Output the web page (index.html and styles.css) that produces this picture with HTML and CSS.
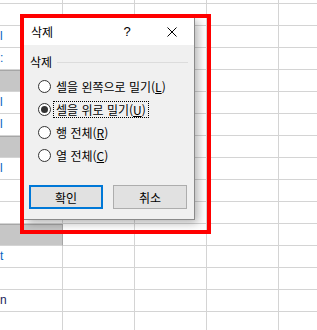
FILE: index.html
```html
<!DOCTYPE html>
<html lang="ko">
<head>
  <meta charset="UTF-8" />
  <title>삭제</title>
  <link rel="stylesheet" href="styles.css">
</head>
<body>
<div class="sheet">
  <div class="grid">
    <div class="cell"></div><div class="cell"></div><div class="cell"></div><div class="cell"></div><div class="cell"></div>
    <div class="cell"></div><div class="cell"></div><div class="cell"></div><div class="cell"></div><div class="cell"></div>
    <div class="cell"><span class="frag">l</span></div><div class="cell"></div><div class="cell"></div><div class="cell"></div><div class="cell"></div>
    <div class="cell"><span class="frag">:</span></div><div class="cell"></div><div class="cell"></div><div class="cell"></div><div class="cell"></div>
    <div class="cell sel"></div><div class="cell"></div><div class="cell"></div><div class="cell"></div><div class="cell"></div>
    <div class="cell"><span class="frag">l</span></div><div class="cell"></div><div class="cell"></div><div class="cell"></div><div class="cell"></div>
    <div class="cell"><span class="frag">l</span></div><div class="cell"></div><div class="cell"></div><div class="cell"></div><div class="cell"></div>
    <div class="cell sel"></div><div class="cell"></div><div class="cell"></div><div class="cell"></div><div class="cell"></div>
    <div class="cell"><span class="frag">l</span></div><div class="cell"></div><div class="cell"></div><div class="cell"></div><div class="cell"></div>
    <div class="cell"></div><div class="cell"></div><div class="cell"></div><div class="cell"></div><div class="cell"></div>
    <div class="cell"></div><div class="cell"></div><div class="cell"></div><div class="cell"></div><div class="cell"></div>
    <div class="cell sel"></div><div class="cell"></div><div class="cell"></div><div class="cell"></div><div class="cell"></div>
    <div class="cell"><span class="frag">t</span></div><div class="cell"></div><div class="cell"></div><div class="cell"></div><div class="cell"></div>
    <div class="cell"></div><div class="cell"></div><div class="cell"></div><div class="cell"></div><div class="cell"></div>
    <div class="cell"><span class="frag dark">n</span></div><div class="cell"></div><div class="cell"></div><div class="cell"></div><div class="cell"></div>
    <div class="cell"></div><div class="cell"></div><div class="cell"></div><div class="cell"></div><div class="cell"></div>
  </div>

  <div class="callout">
    <div class="dialog" role="dialog" aria-label="삭제">
      <div class="titlebar">
        <span class="title">삭제</span>
        <span class="help">?</span>
        <span class="close">
          <svg width="10" height="10" viewBox="0 0 10 10" aria-hidden="true">
            <path d="M0.5 0.5 L9.5 9.5 M9.5 0.5 L0.5 9.5" stroke="#000" stroke-width="1" fill="none" />
          </svg>
        </span>
      </div>
      <div class="body">
        <div class="group-head"><span>삭제</span><span class="rule"></span></div>
        <div class="option"><span class="radio"></span><span class="label">셀을 왼쪽으로 밀기(<u>L</u>)</span></div>
        <div class="option"><span class="radio on"></span><span class="label focus">셀을 위로 밀기(<u>U</u>)</span></div>
        <div class="option"><span class="radio"></span><span class="label">행 전체(<u>R</u>)</span></div>
        <div class="option"><span class="radio"></span><span class="label">열 전체(<u>C</u>)</span></div>
        <div class="buttons">
          <button class="btn primary">확인</button>
          <button class="btn">취소</button>
        </div>
      </div>
    </div>
  </div>
</div>
</body>
</html>
```

FILE: styles.css
```css
html, body {
  margin: 0;
  padding: 0;
  width: 317px;
  height: 330px;
  overflow: hidden;
  background: #fff;
  font-family: "Noto Sans CJK KR", "Noto Sans", sans-serif;
}
.sheet {
  position: relative;
  width: 317px;
  height: 330px;
  overflow: hidden;
}
.grid {
  display: grid;
  grid-template-columns: 63px repeat(4, 72px);
  grid-template-rows: 4px repeat(15, 22px);
}
.cell {
  box-sizing: border-box;
  border-right: 1px solid #d4d4d4;
  border-bottom: 1px solid #d4d4d4;
  overflow: hidden;
  white-space: nowrap;
  font-family: "Liberation Sans", sans-serif;
  font-size: 12px;
  line-height: 21px;
  color: #0563c1;
}
.cell.sel {
  background: #c6c6c6;
  border-right-color: #a6a6a6;
  box-shadow: inset 0 1px 0 #a6a6a6;
}
.frag {
  display: inline-block;
}
.frag.dark {
  color: #1b1b5a;
}
.callout {
  position: absolute;
  left: 20px;
  top: 14px;
  width: 183px;
  height: 212px;
  border: 4px solid #f00;
  overflow: hidden;
}
.dialog {
  width: 170px;
  height: 201px;
  background: #f0f0f0;
  border-right: 1px solid #8a8a8a;
  border-bottom: 1px solid #8a8a8a;
  box-shadow: 3px 3px 9px rgba(0, 0, 0, 0.3);
  display: flex;
  flex-direction: column;
  font-size: 12px;
  color: #000;
}
.titlebar {
  height: 27px;
  background: #fff;
  display: flex;
  align-items: center;
  padding: 0 10px 0 7px;
}
.title {
  font-size: 12px;
}
.help {
  margin-left: auto;
  margin-right: 26px;
  width: 14px;
  text-align: center;
  font-family: "Liberation Sans", sans-serif;
  font-size: 13px;
}
.close {
  width: 24px;
  height: 14px;
  display: flex;
  align-items: center;
  justify-content: center;
}
.body {
  flex: 1;
  padding: 9px 6px 0 6px;
}
.group-head {
  height: 16px;
  line-height: 16px;
  display: flex;
  align-items: center;
  gap: 5px;
  margin-bottom: 5px;
}
.rule {
  flex: 1;
  height: 1px;
  background: #dcdcdc;
}
.option {
  height: 23px;
  display: flex;
  align-items: center;
  padding-left: 8px;
}
.radio {
  width: 13px;
  height: 13px;
  box-sizing: border-box;
  border: 1px solid #333;
  border-radius: 50%;
  background: #fff;
  display: flex;
  align-items: center;
  justify-content: center;
}
.radio.on::after {
  content: "";
  width: 7px;
  height: 7px;
  border-radius: 50%;
  background: #333;
}
.label {
  margin-left: 2px;
  padding: 0 2px;
  line-height: 15px;
  border: 1px dotted transparent;
  white-space: nowrap;
}
.label.focus {
  border-color: #000;
}
.buttons {
  display: flex;
  gap: 10px;
  margin: 18px 0 0 -1px;
}
.btn {
  width: 74px;
  height: 24px;
  box-sizing: border-box;
  background: #e1e1e1;
  border: 1px solid #adadad;
  font-family: inherit;
  font-size: 12px;
  color: #000;
  padding: 0;
}
.btn.primary {
  border: 2px solid #0078d7;
}
```
